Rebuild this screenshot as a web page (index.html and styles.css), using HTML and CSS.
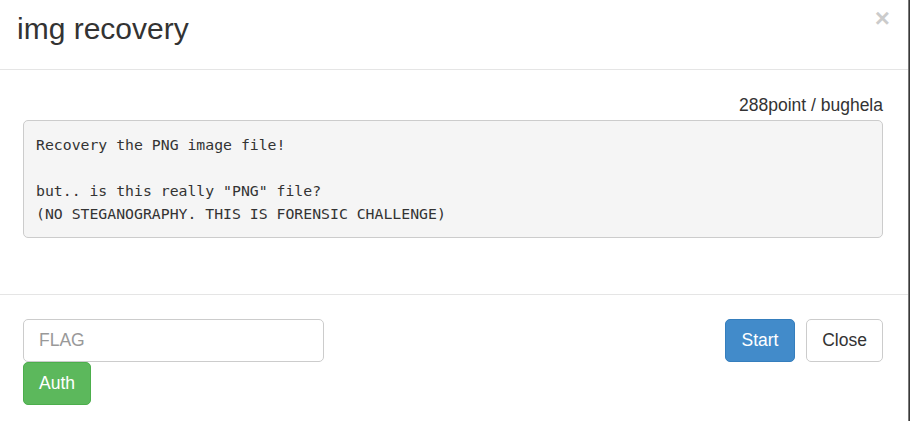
FILE: index.html
```html
<!DOCTYPE html>
<html lang="en">
<head>
<meta charset="utf-8">
<title>img recovery</title>
<link rel="stylesheet" href="styles.css">
</head>
<body>
<div class="modal">
  <div class="modal-header">
    <h3 class="modal-title">img recovery</h3>
    <button class="close" type="button" aria-label="Close">×</button>
  </div>
  <div class="modal-body">
    <div class="meta">288point / bughela</div>
    <pre class="desc">Recovery the PNG image file!

but.. is this really "PNG" file?
(NO STEGANOGRAPHY. THIS IS FORENSIC CHALLENGE)</pre>
  </div>
  <div class="modal-footer">
    <form class="auth-form">
      <input class="form-control" type="text" placeholder="FLAG">
      <button class="btn btn-success" type="button">Auth</button>
    </form>
    <div class="actions">
      <button class="btn btn-primary" type="button">Start</button>
      <button class="btn btn-default" type="button">Close</button>
    </div>
  </div>
</div>
</body>
</html>
```

FILE: styles.css
```css
* { box-sizing: border-box; }

html, body {
  margin: 0;
  padding: 0;
  height: 100%;
  overflow: hidden;
}

body {
  background: #3a3a3a;
  font-family: "Liberation Sans", Arial, sans-serif;
  font-size: 17.5px;
  line-height: 25px;
  color: #333;
}

.modal {
  width: 909px;
  min-height: 100%;
  background: #fff;
  border-right: 1px solid #7a7a7a;
}

.modal-header {
  display: flex;
  justify-content: space-between;
  align-items: flex-start;
  height: 70px;
  padding: 12px 18px 0 17px;
  border-bottom: 1px solid #e5e5e5;
}

.modal-title {
  margin: 0;
  font-size: 30px;
  font-weight: 400;
  line-height: 33px;
  color: #333;
}

.close {
  margin: -7px 0 0;
  padding: 0;
  border: 0;
  background: transparent;
  font-family: "Liberation Sans", Arial, sans-serif;
  font-size: 26px;
  font-weight: 700;
  line-height: 26px;
  color: #000;
  opacity: 0.2;
  cursor: pointer;
}

.modal-body {
  padding: 25px 25px 25px 23px;
}

.meta {
  text-align: right;
  line-height: 25px;
  margin-top: -2px;
  margin-bottom: 2px;
}

.desc {
  margin: 0 0 12.5px;
  padding: 12px;
  height: 118px;
  background: #f5f5f5;
  border: 1px solid #ccc;
  border-radius: 5px;
  font-family: "DejaVu Sans Mono", Consolas, monospace;
  font-size: 14.8px;
  line-height: 23px;
  color: #333;
  white-space: pre;
}

.modal-footer {
  display: flex;
  justify-content: space-between;
  align-items: flex-start;
  margin-top: 18.5px;
  padding: 24px 25px 25px 23px;
  border-top: 1px solid #e5e5e5;
}

.auth-form {
  display: flex;
  flex-direction: column;
  align-items: flex-start;
  margin: 0;
}

.form-control {
  width: 301px;
  height: 43px;
  padding: 7.5px 15px;
  border: 1px solid #ccc;
  border-radius: 5px;
  font-family: "Liberation Sans", Arial, sans-serif;
  font-size: 17.5px;
  color: #555;
  background: #fff;
  outline: none;
}

.form-control::placeholder {
  color: #999;
}

.actions {
  display: flex;
  gap: 11px;
}

.btn {
  height: 43px;
  padding: 7.5px 15px;
  border: 1px solid transparent;
  border-radius: 5px;
  font-family: "Liberation Sans", Arial, sans-serif;
  font-size: 17.5px;
  line-height: 25px;
  cursor: pointer;
}

.btn-success {
  width: 68px;
  padding: 7.5px 0;
  color: #fff;
  background: #5cb85c;
  border-color: #4cae4c;
}

.btn-primary {
  width: 70px;
  padding: 7.5px 0;
  color: #fff;
  background: #428bca;
  border-color: #357ebd;
}

.btn-default {
  width: 77px;
  padding: 7.5px 0;
  color: #333;
  background: #fff;
  border-color: #ccc;
}
```
